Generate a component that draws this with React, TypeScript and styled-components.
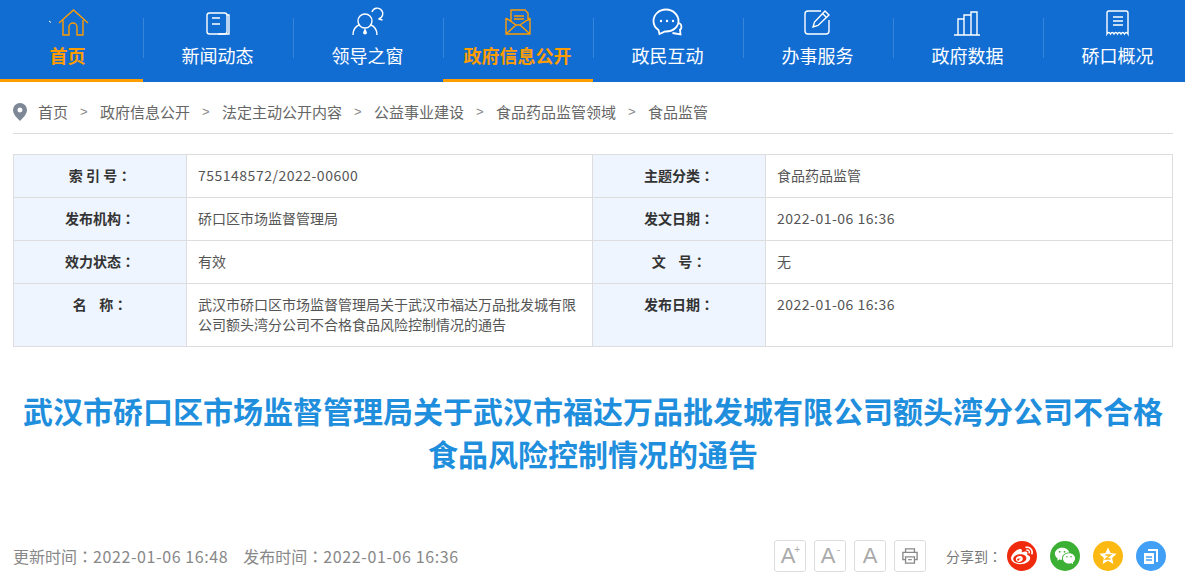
import React, { ReactElement, ReactNode } from 'react';
import styled, { createGlobalStyle } from 'styled-components';
import { FaWeibo } from 'react-icons/fa';
import { RiWechatFill } from 'react-icons/ri';

const GlobalStyle = createGlobalStyle`
  html, body {
    margin: 0;
    padding: 0;
    height: 579px;
    overflow: hidden;
    background: #fff;
    font-family: "Noto Sans CJK SC", "Noto Sans", sans-serif;
  }
`;

const NavBar = styled.nav`
  display: flex;
  justify-content: center;
  height: 82px;
  overflow: hidden;
  background: #126dd3;
`;

const NavItem = styled.a<{ $active?: boolean }>`
  box-sizing: border-box;
  flex: 0 0 150px;
  height: 82px;
  display: flex;
  flex-direction: column;
  align-items: center;
  padding-top: 6px;
  position: relative;
  color: ${({ $active }) => ($active ? '#ff9c00' : '#fff')};
  font-size: 18px;
  font-weight: ${({ $active }) => ($active ? 700 : 400)};
  line-height: 26px;
  border-bottom: 3px solid ${({ $active }) => ($active ? '#ff9c00' : 'transparent')};
  &:not(:first-child)::before {
    content: '';
    position: absolute;
    left: 0;
    top: 18px;
    height: 40px;
    width: 1px;
    background: rgba(255, 255, 255, 0.16);
  }
`;

const NavIcon = styled.svg<{ $shift?: boolean }>`
  width: 32px;
  height: 32px;
  margin-bottom: 4px;
  margin-left: ${({ $shift }) => ($shift ? '10px' : '0')};
  overflow: visible;
  fill: none;
  stroke: currentColor;
  stroke-width: 1.4;
`;

const Content = styled.main`
  padding: 0 12px 0 13px;
`;

const Crumbs = styled.div`
  box-sizing: border-box;
  height: 52px;
  display: flex;
  align-items: center;
  padding-top: 8px;
  border-bottom: 1px solid #ddd;
  color: #666;
  font-size: 15px;
`;

const CrumbSep = styled.span`
  width: 8px;
  margin: 0 12px;
  color: #888;
  font-family: "Liberation Sans", sans-serif;
  font-size: 13px;
`;

const Pin = styled.svg`
  width: 14px;
  height: 18px;
  margin-right: 11px;
  fill: #7d8796;
`;

const InfoTable = styled.table`
  width: 1159px;
  margin-top: 20px;
  border-collapse: collapse;
  table-layout: fixed;
  font-size: 14px;
  color: #555;
`;

const LabelCell = styled.th`
  height: 42px;
  padding: 0;
  background: #eef5fe;
  border: 1px solid #ddd;
  font-weight: 700;
  font-size: 14px;
  color: #333;
  text-align: center;
  vertical-align: top;
  line-height: 41px;
  white-space: pre;
`;

const ValueCell = styled.td<{ $tall?: boolean; $num?: boolean }>`
  padding: ${({ $tall }) => ($tall ? '10px 11px 12px' : '0 11px')};
  border: 1px solid #ddd;
  vertical-align: top;
  line-height: ${({ $tall }) => ($tall ? '20px' : '41px')};
  letter-spacing: ${({ $num }) => ($num ? '0.5px' : '0')};
`;

// the reference centres the full-width colon in its box, as the TC cut does
const Colon = styled.span`
  font-family: "Noto Sans CJK TC", sans-serif;
`;

const Title = styled.h1`
  margin: 42px 0 0;
  color: #1f8fdd;
  font-size: 30px;
  font-weight: 700;
  line-height: 43px;
  text-align: center;
`;

const Footer = styled.div`
  margin-top: 64px;
  padding-right: 7px;
  display: flex;
  align-items: center;
  height: 34px;
  color: #888;
  font-size: 16px;
`;

const Dates = styled.div`
  flex: 1;
  display: flex;
  gap: 15px;
`;

const Num = styled.span`
  letter-spacing: 0.6px;
`;

const Tool = styled.button<{ $nudge?: boolean }>`
  box-sizing: border-box;
  width: 32px;
  height: 32px;
  margin-right: 8px;
  padding: ${({ $nudge }) => ($nudge ? '0 4px 0 0' : '0')};
  display: flex;
  align-items: center;
  justify-content: center;
  position: relative;
  background: #fff;
  border: 1px solid #ddd;
  border-radius: 3px;
  color: #aaa;
  font-family: "Liberation Sans", sans-serif;
  font-size: 22px;
  line-height: 1;
`;

const Sup = styled.span`
  position: absolute;
  top: 4px;
  right: 5px;
  font-size: 10px;
`;

const ShareLabel = styled.span`
  margin: 0 5px 0 12px;
  font-size: 14px;
  color: #777;
`;

const Share = styled.a<{ $bg: string }>`
  width: 30px;
  height: 30px;
  margin-left: 13px;
  display: flex;
  align-items: center;
  justify-content: center;
  border-radius: 50%;
  color: #fff;
  font-size: 22px;
  background: ${({ $bg }) => $bg};
  &:first-of-type {
    margin-left: 0;
  }
`;

const ShareIcon = styled.svg`
  width: 22px;
  height: 22px;
`;

type NavEntry = { label: string; icon: ReactNode; active?: boolean; shift?: boolean };

const navEntries: NavEntry[] = [
  {
    label: '首页',
    active: true,
    shift: true,
    icon: (
      <>
        <path d="M-8 15l2 1.500" stroke="#fff" strokeWidth="1" />
        <path d="M2 17 16.500 4 31 17M6 14v15h6v-8a4 4 0 0 1 8 0v8h6V14" />
      </>
    ),
  },
  {
    label: '新闻动态',
    icon: (
      <>
        <rect x="5" y="7" width="20" height="21" rx="2.500" />
        <path d="M25 9h2v19H16M10 12h8M10 18h8" />
      </>
    ),
  },
  {
    label: '领导之窗',
    icon: (
      <>
        <circle cx="13" cy="15" r="7" />
        <path d="M1 29c0-6 3-9 7-10.500M25 29c0-6-3-9-7-10.500" />
        <path d="M13 22l-2 4.500a2 2 0 0 0 4 0z" fill="currentColor" stroke="none" />
        <path d="M20 6a5.500 5.500 0 1 1 6.500 7l4 1" />
      </>
    ),
  },
  {
    label: '政府信息公开',
    active: true,
    icon: (
      <>
        <path d="M4 12v16h24V12M4 28l10-9h4l10 9M4 12l10 7M28 12l-10 7M9 15V4h14l3 3v8" />
        <path d="M12 10h10M12 13h10" />
      </>
    ),
  },
  {
    label: '政民互动',
    icon: (
      <>
        <path d="M14 3.500C7 3.500 1.500 8.500 1.500 15c0 4 2 7 5 9l1 4 5.500-2.500h1c7 0 12.500-4.500 12.500-10.500S21 3.500 14 3.500z" strokeWidth="1.800" />
        <path d="M27 17c2 1 3 3 2 6l-1 .5.500 5-8-1.500" strokeWidth="1.800" />
        <circle cx="9" cy="15" r="1.200" fill="currentColor" stroke="none" />
        <circle cx="15" cy="15" r="1.200" fill="currentColor" stroke="none" />
        <circle cx="21" cy="15" r="1.200" fill="currentColor" stroke="none" />
      </>
    ),
  },
  {
    label: '办事服务',
    icon: (
      <>
        <path d="M19 5H6a3 3 0 0 0-3 3v17a3 3 0 0 0 3 3h18a3 3 0 0 0 3-3V14" />
        <path d="M11 21l1.500-5L23 5l4 4-11 10.500zM20.500 7.500l4 4" />
      </>
    ),
  },
  {
    label: '政府数据',
    icon: <path d="M2 29h26M6 29V13h6v16M12 29V9h7v20M19 29V6h6v23" />,
  },
  {
    label: '硚口概况',
    icon: (
      <>
        <path d="M5 28V7a2 2 0 0 1 2-2h17a2 2 0 0 1 2 2v21q-1.750-3-3.500 0q-1.750-3-3.500 0q-1.750-3-3.500 0q-1.750-3-3.500 0q-1.750-3-3.500 0q-1.750-3-3.500 0z" />
        <path d="M11 11h10M11 15h10M11 19h10" />
      </>
    ),
  },
];

const crumbs = ['首页', '政府信息公开', '法定主动公开内容', '公益事业建设', '食品药品监管领域', '食品监管'];

const App = (): ReactElement => {
  return (
    <>
      <GlobalStyle />
      <NavBar>
        {navEntries.map((entry) => (
          <NavItem key={entry.label} $active={entry.active}>
            <NavIcon viewBox="0 0 32 32" $shift={entry.shift}>{entry.icon}</NavIcon>
            {entry.label}
          </NavItem>
        ))}
      </NavBar>
      <Content>
        <Crumbs>
          <Pin viewBox="0 0 14 18">
            <path fillRule="evenodd" d="M7 0a7 7 0 0 1 7 7c0 4-4 8-7 11-3-3-7-7-7-11a7 7 0 0 1 7-7zm0 4.500a2.500 2.500 0 1 0 0 5 2.500 2.500 0 0 0 0-5z" />
          </Pin>
          {crumbs.map((c, i) => (
            <React.Fragment key={c}>
              {i > 0 && <CrumbSep>&gt;</CrumbSep>}
              <span>{c}</span>
            </React.Fragment>
          ))}
        </Crumbs>
        <InfoTable>
          <colgroup>
            <col style={{ width: 173 }} />
            <col style={{ width: 406 }} />
            <col style={{ width: 173 }} />
            <col style={{ width: 407 }} />
          </colgroup>
          <tbody>
            <tr>
              <LabelCell>索 引 号<Colon>：</Colon></LabelCell>
              <ValueCell $num>755148572/2022-00600</ValueCell>
              <LabelCell>主题分类<Colon>：</Colon></LabelCell>
              <ValueCell>食品药品监管</ValueCell>
            </tr>
            <tr>
              <LabelCell>发布机构<Colon>：</Colon></LabelCell>
              <ValueCell>硚口区市场监督管理局</ValueCell>
              <LabelCell>发文日期<Colon>：</Colon></LabelCell>
              <ValueCell $num>2022-01-06 16:36</ValueCell>
            </tr>
            <tr>
              <LabelCell>效力状态<Colon>：</Colon></LabelCell>
              <ValueCell>有效</ValueCell>
              <LabelCell>文    号<Colon>：</Colon></LabelCell>
              <ValueCell>无</ValueCell>
            </tr>
            <tr>
              <LabelCell>名    称<Colon>：</Colon></LabelCell>
              <ValueCell $tall>武汉市硚口区市场监督管理局关于武汉市福达万品批发城有限公司额头湾分公司不合格食品风险控制情况的通告</ValueCell>
              <LabelCell>发布日期<Colon>：</Colon></LabelCell>
              <ValueCell $num>2022-01-06 16:36</ValueCell>
            </tr>
          </tbody>
        </InfoTable>
        <Title>武汉市硚口区市场监督管理局关于武汉市福达万品批发城有限公司额头湾分公司不合格食品风险控制情况的通告</Title>
        <Footer>
          <Dates>
            <span>更新时间<Colon>：</Colon><Num>2022-01-06 16:48</Num></span>
            <span>发布时间<Colon>：</Colon><Num>2022-01-06 16:36</Num></span>
          </Dates>
          <Tool $nudge>A<Sup>+</Sup></Tool>
          <Tool $nudge>A<Sup>-</Sup></Tool>
          <Tool>A</Tool>
          <Tool>
            <svg width="16" height="16" viewBox="0 0 18 18" fill="none" stroke="#888" strokeWidth="1.500">
              <path d="M4 5V1h10v4M4 13H1V5h16v8h-3M4 10h10v7H4zM7 13h4" />
            </svg>
          </Tool>
          <ShareLabel>分享到<Colon>：</Colon></ShareLabel>
          <Share $bg="#f02a0c"><FaWeibo /></Share>
          <Share $bg="#3cb034"><RiWechatFill /></Share>
          <Share $bg="#fdb913">
            <ShareIcon viewBox="0 0 22 22">
              <path d="M11 2.500l2.600 5.600 6 .7-4.500 4.100 1.300 6-5.400-3.100-5.400 3.100 1.300-6L2.400 8.800l6-.7z" fill="#fff" />
              <path d="M8.500 10h5l-5 4h5" stroke="#fdb913" strokeWidth="1.300" fill="none" />
            </ShareIcon>
          </Share>
          <Share $bg="#419ff5">
            <ShareIcon viewBox="0 0 22 22">
              <path d="M8 4h10v13h-2V6H8z" fill="#fff" />
              <path d="M4 8h10v11H4z" fill="#fff" />
              <path d="M6 12h6M6 15h6" stroke="#419ff5" strokeWidth="1.300" />
            </ShareIcon>
          </Share>
        </Footer>
      </Content>
    </>
  );
};

export default App;
